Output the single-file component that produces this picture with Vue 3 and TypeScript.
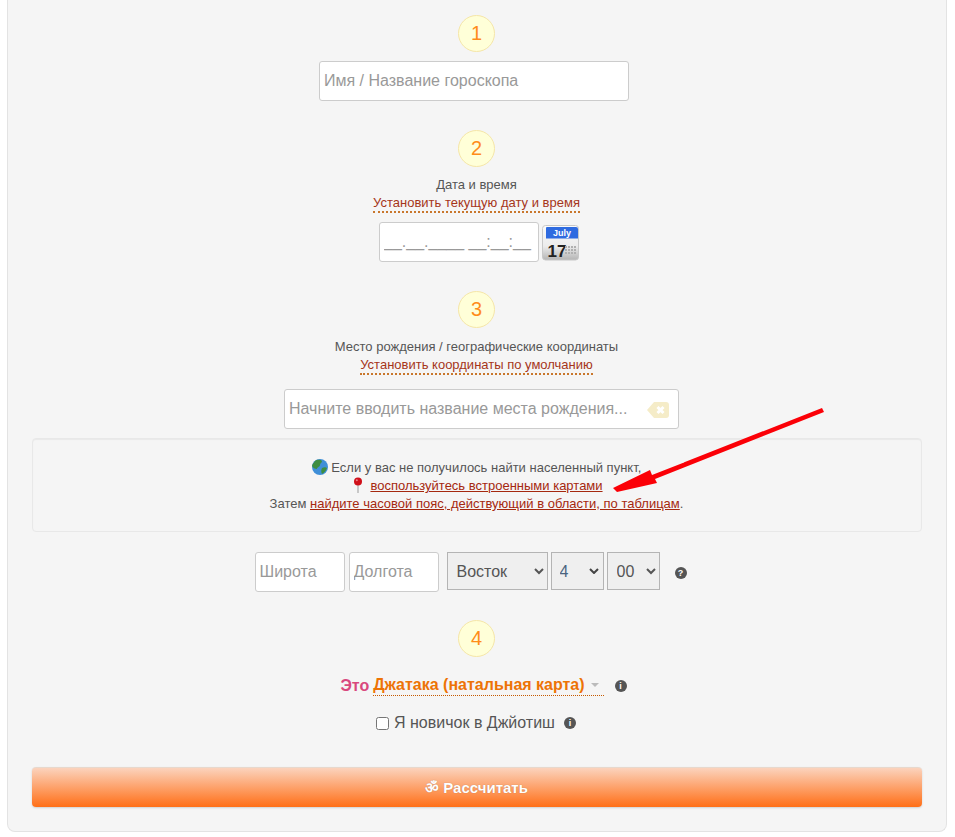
<template>
  <div class="page">
    <div class="panel">
      <div class="step first">1</div>
      <input class="field name" type="text" placeholder="Имя / Название гороскопа" />

      <div class="step second">2</div>
      <div class="label">Дата и время</div>
      <a class="dotted">Установить текущую дату и время</a>
      <div class="date-row">
        <input class="field date" type="text" placeholder="__.__.____ __:__:__" />
        <svg class="calendar" width="37" height="36" viewBox="0 0 37 36">
          <defs>
            <linearGradient id="calBody" x1="0" y1="0" x2="0" y2="1">
              <stop offset="0" stop-color="#fafafa" />
              <stop offset="0.6" stop-color="#ececec" />
              <stop offset="1" stop-color="#b4b4b4" />
            </linearGradient>
          </defs>
          <rect x="0.5" y="0.5" width="36" height="34.5" rx="3" fill="url(#calBody)" stroke="#c8c8c8" />
          <path d="M5 2H34a2 2 0 0 1 2 2V13.5H4V3a1 1 0 0 1 1-1Z" fill="#2f6be0" />
          <text x="20" y="10.5" class="cal-month">July</text>
          <text x="5.5" y="32" class="cal-day">17</text>
          <g fill="#b0b0b0">
            <rect v-for="d in calendarDots" :key="d.id" :x="d.x" :y="d.y" width="2" height="2" />
          </g>
        </svg>
      </div>

      <div class="step third">3</div>
      <div class="label wide">Место рождения / географические координаты</div>
      <a class="dotted">Установить координаты по умолчанию</a>
      <div class="place-box">
        <input class="field place" type="text" placeholder="Начните вводить название места рождения..." />
        <svg class="clear" width="22" height="16" viewBox="0 0 22 16">
          <path d="M7 0H19a3 3 0 0 1 3 3V13a3 3 0 0 1-3 3H7L0 8Z" fill="#f5ecc8" />
          <path d="M10.5 5l6 6M16.5 5l-6 6" stroke="#fff" stroke-width="3" />
        </svg>
      </div>

      <div class="well">
        <div>
          <svg class="emoji globe" width="16" height="16" viewBox="0 0 16 16">
            <circle cx="8" cy="8" r="8" fill="#3f8fd8" />
            <path d="M3 2c3-2 6-1 7 0 0 2-2 2-2 4s-3 2-3 4c-2 0-4-1-5-3 0-2 2-3 3-5ZM10 9c2-1 4-1 5 0-1 3-3 5-5 6-1-2-1-4 0-6Z" fill="#3e8e41" />
          </svg>
          Если у вас не получилось найти населенный пункт,
        </div>
        <div>
          <svg class="emoji pin" width="16" height="16" viewBox="0 0 16 16">
            <path d="M8 7v9" stroke="#aaa" stroke-width="1.2" />
            <circle cx="8" cy="4.5" r="4" fill="#d0101a" />
            <circle cx="6.8" cy="3.2" r="1" fill="#f08088" />
          </svg>
          <a class="solid">воспользуйтесь встроенными картами</a>
        </div>
        <div>Затем <a class="solid">найдите часовой пояс, действующий в области, по таблицам</a>.</div>
      </div>

      <div class="coords">
        <input class="field coord" type="text" placeholder="Широта" />
        <input class="field coord" type="text" placeholder="Долгота" />
        <select class="pick side"><option>Восток</option><option>Запад</option></select>
        <select class="pick hour blue"><option>4</option></select>
        <select class="pick hour"><option>00</option></select>
        <span class="badge help">?</span>
      </div>

      <div class="step fourth">4</div>
      <div class="chart-row">
        <span class="this">Это</span>
        <span class="chart-type">Джатака (натальная карта)<i class="caret"></i></span>
        <span class="badge info">i</span>
      </div>
      <label class="novice">
        <input type="checkbox" />
        <span>Я новичок в Джйотиш</span>
        <span class="badge info">i</span>
      </label>

      <button class="submit" type="button">ॐ Рассчитать</button>
    </div>

    <svg class="arrow" width="220" height="90" viewBox="0 0 220 90">
      <path d="M212 1 214 5 45 72 47 76 7 85 3 81 40 63 42 68Z" fill="#fb0007" />
    </svg>
  </div>
</template>

<script setup lang="ts">
const calendarDots: { id: string; x: number; y: number }[] = [];
for (let r = 0; r < 3; r++) {
  for (let c = 0; c < 4; c++) {
    calendarDots.push({ id: `${r}-${c}`, x: 23 + c * 3, y: 21 + r * 3 });
  }
}
</script>

<style scoped>
.page {
  position: relative;
  width: 955px;
  height: 837px;
  overflow: hidden;
  background: #fff;
  font-family: "Liberation Sans", Arial, sans-serif;
  font-size: 13px;
  color: #555;
}
.panel {
  box-sizing: border-box;
  width: 940px;
  height: 832px;
  margin-left: 7px;
  padding: 15px 25px 0 24px;
  background: #f5f5f5;
  border: 1px solid #e3e3e3;
  border-top: none;
  border-radius: 0 0 8px 8px;
  display: flex;
  flex-direction: column;
  align-items: center;
}
.step {
  box-sizing: border-box;
  width: 37px;
  height: 37px;
  flex: none;
  border: 1px solid #f5e6a8;
  border-radius: 50%;
  background: #ffffd8;
  color: #ff8c1a;
  font-size: 20px;
  line-height: 35px;
  text-align: center;
}
.second { margin-top: 29px; }
.third { margin-top: 29px; }
.fourth { margin-top: 28px; }
.field {
  box-sizing: border-box;
  height: 40px;
  padding: 0 4px;
  border: 1px solid #ccc;
  border-radius: 3px;
  background: #fff;
  font-family: inherit;
  font-size: 16px;
  color: #555;
  outline: none;
}
.field::placeholder { color: #999; opacity: 1; }
.name { width: 310px; margin: 9px 5px 0 0; }
.label {
  margin-top: 9px;
  line-height: 18px;
}
.label.wide { margin-top: 10px; }
.dotted {
  color: #a5351a;
  line-height: 16px;
  margin-top: 1px;
  border-bottom: 2px dotted #c9772c;
}
.date-row {
  display: flex;
  align-items: center;
  gap: 3px;
  margin-top: 9px;
  padding-left: 5px;
}
.date { width: 160px; }
.calendar { flex: none; margin-top: 1px; }
.cal-month { font: bold 9px "Liberation Sans", sans-serif; fill: #fff; text-anchor: middle; }
.cal-day { font: bold 17px "Liberation Sans", sans-serif; fill: #222; }
.place-box {
  position: relative;
  margin: 14px 0 0 10px;
  width: 395px;
}
.place { width: 100%; display: block; }
.clear { position: absolute; right: 10px; top: 13px; }
.well {
  box-sizing: border-box;
  width: 890px;
  height: 94px;
  flex: none;
  margin-top: 9px;
  padding: 20px 0 0;
  background: #f5f5f5;
  border: 1px solid #e8e8e8;
  border-radius: 4px;
  box-shadow: inset 0 1px 1px rgba(0, 0, 0, 0.05);
  text-align: center;
  line-height: 18px;
}
.emoji { vertical-align: -3px; }
.pin { margin-right: 4px; }
.solid {
  color: #a5280f;
  text-decoration: underline;
}
.coords {
  display: flex;
  align-items: flex-start;
  margin: 20px 12px 0 0;
  height: 40px;
}
.coord { width: 90px; margin-right: 4px; }
.pick {
  box-sizing: border-box;
  height: 38px;
  padding: 0 5px;
  margin-right: 3px;
  border: 1px solid #b4b4b4;
  border-radius: 0;
  background-color: #efefef;
  font-family: inherit;
  font-size: 16px;
  color: #555;
}
.side { width: 101px; margin-left: 4px; }
.hour { width: 53px; }
.blue {
  appearance: none;
  padding-left: 8px;
  color: #4a6480;
  background-image: url("data:image/svg+xml,%3Csvg xmlns='http://www.w3.org/2000/svg' width='10' height='6'%3E%3Cpath d='M1 1l4 4 4-4' fill='none' stroke='%23444' stroke-width='2'/%3E%3C/svg%3E");
  background-repeat: no-repeat;
  background-position: right 4px center;
}
.badge {
  display: inline-block;
  width: 12px;
  height: 12px;
  border-radius: 50%;
  background: #555;
  color: #fff;
  font-size: 9px;
  font-weight: bold;
  line-height: 12px;
  text-align: center;
}
.help { margin: 15px 0 0 12px; }
.chart-row {
  display: flex;
  align-items: center;
  margin: 18px 0 0 14px;
  font-size: 16px;
  font-weight: bold;
  line-height: 20px;
}
.this { color: #d9487d; margin-right: 4px; }
.chart-type {
  color: #ed7306;
  border-bottom: 1px dotted #c65a00;
  padding-right: 5px;
}
.caret {
  display: inline-block;
  width: 0;
  height: 0;
  margin-left: 6px;
  vertical-align: 3px;
  border-left: 4px solid transparent;
  border-right: 4px solid transparent;
  border-top: 4px solid #bbb;
}
.chart-row .info { margin-left: 11px; }
.novice {
  display: flex;
  align-items: center;
  margin: 17px 1px 0 0;
  font-size: 16px;
  line-height: 20px;
}
.novice input { width: 13px; height: 13px; margin: 0 5px 0 0; }
.novice .info { margin-left: 9px; }
.submit {
  width: 890px;
  height: 40px;
  flex: none;
  margin-top: 34px;
  padding: 0 0 2px;
  border: none;
  border-top: 1px solid #e8d8cc;
  border-radius: 4px;
  background: linear-gradient(#fbd3bd, #ff6f17);
  box-shadow: 0 1px 2px rgba(0, 0, 0, 0.15);
  color: #fff;
  font-family: inherit;
  font-size: 15px;
  font-weight: bold;
  text-shadow: 0 0 1px rgba(0, 0, 0, 0.3);
}
.arrow {
  position: absolute;
  left: 610px;
  top: 407px;
}
</style>
